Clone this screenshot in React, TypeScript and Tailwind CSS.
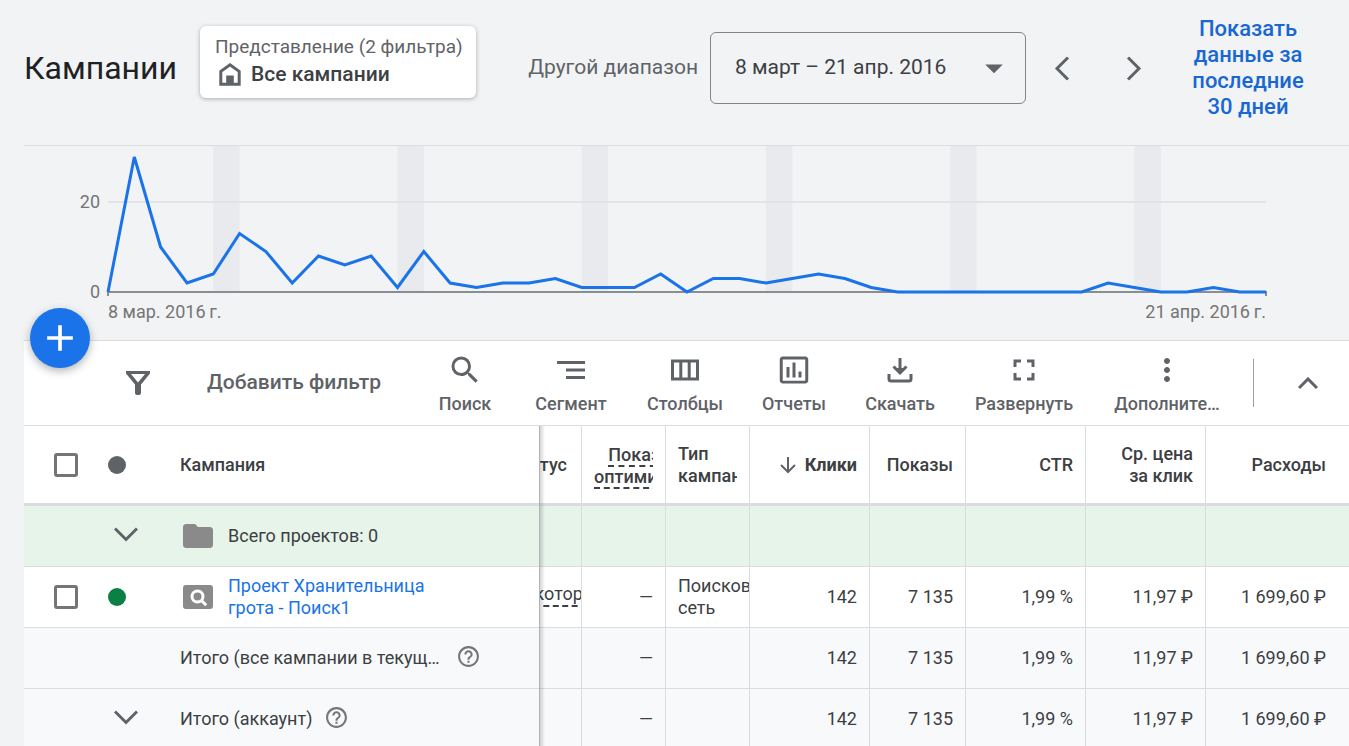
import React, { useState } from 'react';
import {
  MdAdd,
  MdArrowDropDown,
  MdFolder,
  MdFullscreen,
  MdHelpOutline,
  MdInsertChartOutlined,
  MdMoreVert,
  MdSearch,
} from 'react-icons/md';

// clicks per day, 8 March to 21 April
const clicks = [
  0, 30, 10, 2, 4, 13, 9, 2, 8, 6, 8, 1, 9, 2, 1, 2, 2, 3, 1, 1, 1, 4, 0, 3, 3, 2, 3, 4, 3, 1, 0, 0, 0, 0, 0, 0, 0, 0,
  2, 1, 0, 0, 1, 0, 0,
];

const CHART_LEFT = 84;
const CHART_WIDTH = 1158;
const CHART_BASE = 146;
const STEP = CHART_WIDTH / (clicks.length - 1);

function ClicksChart() {
  const points = clicks.map((v, i) => `${(CHART_LEFT + i * STEP).toFixed(1)},${CHART_BASE - v * 4.5}`).join(' ');
  const weekends = [4, 11, 18, 25, 32, 39];

  return (
    <svg viewBox="0 0 1325 194" className="block w-full" role="img" aria-label="Клики">
      {weekends.map((day) => (
        <rect key={day} x={CHART_LEFT + day * STEP} y="0" width={STEP} height={CHART_BASE} fill="#e8eaed" />
      ))}
      <line x1="84" y1="56" x2="1242" y2="56" stroke="#e1e3e6" strokeWidth="2" />
      <path d="M84 150V146H1242V150" fill="none" stroke="#8a8d91" strokeWidth="2" />
      <polyline points={points} fill="none" stroke="#1a73e8" strokeWidth="3" />
      <g fill="#757575" fontSize="18" fontFamily="Roboto, sans-serif">
        <text x="76" y="62" textAnchor="end">20</text>
        <text x="76" y="152" textAnchor="end">0</text>
        <text x="84" y="172">8 мар. 2016{'\u2009'}г.</text>
        <text x="1242" y="172" textAnchor="end">21 апр. 2016{'\u2009'}г.</text>
      </g>
    </svg>
  );
}

function Chevron({ className = '' }) {
  return (
    <svg className={className} width="24" height="15" viewBox="0 0 24 15" fill="none" stroke="#5f6368" strokeWidth="3">
      <path d="M1 1.5 12 12.5 23 1.5" />
    </svg>
  );
}

function HomeIcon() {
  return (
    <svg width="22" height="23" viewBox="0 0 22 23" fill="none" stroke="#5f6368" strokeWidth="3">
      <path d="M1.8 8.4 11 1.8l9.2 6.6v12.8H1.8z" />
      <path d="M7.2 12.5h7.6v9H7.2z" fill="#5f6368" stroke="none" />
    </svg>
  );
}

function FilterIcon() {
  return (
    <svg width="24" height="24" viewBox="0 0 24 24" fill="#5f6368">
      <path fillRule="evenodd" d="M0 0h24v2.5L15 13.5V22a2 2 0 0 1-2 2h-2a2 2 0 0 1-2-2v-8.5L0 2.5zM5 3l7 8.5L19 3z" />
    </svg>
  );
}

function SegmentIcon() {
  return (
    <svg width="28" height="18" viewBox="0 0 28 18" fill="#5f6368">
      <path d="M0 0h28v3H0zM9 7.5h19v3H9zM9 15h19v3H9z" />
    </svg>
  );
}

function ColumnsIcon() {
  return (
    <svg width="28" height="22" viewBox="0 0 28 22" fill="none" stroke="#5f6368" strokeWidth="3">
      <path d="M1.5 2h25v18h-25zM9.8 2v18M18.2 2v18" />
    </svg>
  );
}

function DownloadIcon() {
  return (
    <svg width="26" height="26" viewBox="0 0 26 26" fill="none" stroke="#5f6368" strokeWidth="3">
      <path d="M2 17v5a2 2 0 0 0 2 2h18a2 2 0 0 0 2-2v-5" />
      <path d="M13 1v13M6.5 9.500 13 16l6.500-6.500" />
      <path d="m8 11 5 5 5-5z" fill="#5f6368" stroke="none" />
    </svg>
  );
}

function SearchCampaignIcon() {
  return (
    <svg width="30" height="24" viewBox="0 0 30 24" fill="none">
      <rect width="30" height="24" rx="3" fill="#8a8a8a" />
      <circle cx="14.5" cy="11.5" r="5.5" stroke="#fff" strokeWidth="3" />
      <path d="m18 15 5.200 5.200" stroke="#fff" strokeWidth="3" />
    </svg>
  );
}

const tools = [
  { label: 'Поиск', icon: <MdSearch size={36} />, width: 'w-[100px]' },
  { label: 'Сегмент', icon: <SegmentIcon />, width: 'w-[112px]' },
  { label: 'Столбцы', icon: <ColumnsIcon />, width: 'w-[116px]' },
  { label: 'Отчеты', icon: <MdInsertChartOutlined size={36} />, width: 'w-[102px]' },
  { label: 'Скачать', icon: <DownloadIcon />, width: 'w-[110px]' },
  { label: 'Развернуть', icon: <MdFullscreen size={36} />, width: 'w-[138px]' },
  { label: 'Дополните…', icon: <MdMoreVert size={36} />, width: 'w-[148px]' },
];

const line = 'border-b border-r border-[#dadce0]';
const edge =
  'relative z-10 border-r after:absolute after:top-0 after:left-full after:w-[6px] after:bg-linear-to-r after:from-black/20 after:to-transparent';
const frozen = `${edge} border-b border-[#dadce0] after:-bottom-px`;

function Metrics() {
  return (
    <>
      <td className={`${line} px-3 text-right`}>142</td>
      <td className={`${line} px-3 text-right`}>7 135</td>
      <td className={`${line} px-3 text-right`}>1,99 %</td>
      <td className={`${line} px-3 text-right`}>11,97 ₽</td>
      <td className="border-b border-[#dadce0] pr-[23px] text-right">1 699,60 ₽</td>
    </>
  );
}

function CampaignTable() {
  const [all, setAll] = useState(false);
  const [picked, setPicked] = useState(false);
  const box =
    'block h-6 w-6 appearance-none rounded-[3px] border-[3px] border-[#757575] bg-white checked:border-[#1a73e8] checked:bg-[#1a73e8]';

  return (
    <table className="w-full table-fixed border-separate border-spacing-0 text-[18px] leading-[22px] text-[#3c4043]">
      <colgroup>
        <col className="w-[68px]" />
        <col className="w-[76px]" />
        <col className="w-[372px]" />
        <col className="w-[42px]" />
        <col className="w-[84px]" />
        <col className="w-[84px]" />
        <col className="w-[120px]" />
        <col className="w-[96px]" />
        <col className="w-[120px]" />
        <col className="w-[120px]" />
        <col />
      </colgroup>
      <thead>
        <tr className="h-20 bg-white [&>th]:border-b-[3px] [&>th]:border-[#dadce0] [&>th]:p-0 [&>th]:font-medium">
          <th>
            <input
              type="checkbox"
              aria-label="Выбрать все кампании"
              className={`${box} ml-[30px]`}
              checked={all}
              onChange={() => setAll(!all)}
            />
          </th>
          <th>
            <span className="ml-4 block h-[18px] w-[18px] rounded-full bg-[#5f6368]" />
          </th>
          <th className={`${edge} after:-bottom-[3px]`}>
            <span className="block pl-3 text-left">Кампания</span>
          </th>
          <th className="border-r">
            <span className="flex justify-end overflow-hidden pr-[14px]">Статус</span>
          </th>
          <th className="border-r">
            <span className="mx-3 block overflow-hidden pt-1 pb-px text-left">
              <span className="inline-block text-right align-top">
                <span className="border-b-2 border-dashed border-[#3c4043]">Показатель</span>
                <br />
                <span className="border-b-2 border-dashed border-[#3c4043]">оптимизации</span>
              </span>
            </span>
          </th>
          <th className="border-r">
            <span className="mx-3 block overflow-hidden text-left">Тип кампании</span>
          </th>
          <th className="border-r">
            <button type="button" className="ml-auto flex items-center gap-2 pr-3 font-bold">
              <svg width="18" height="18" viewBox="0 0 18 18" fill="none" stroke="#5f6368" strokeWidth="2">
                <path d="M9 1v15M2 9l7 7 7-7" />
              </svg>
              Клики
            </button>
          </th>
          <th className="border-r">
            <span className="block pr-3 text-right">Показы</span>
          </th>
          <th className="border-r">
            <span className="block pr-3 text-right">CTR</span>
          </th>
          <th className="border-r">
            <span className="block pr-3 pl-8 text-right">Ср. цена за клик</span>
          </th>
          <th>
            <span className="block pr-[23px] text-right">Расходы</span>
          </th>
        </tr>
      </thead>
      <tbody>
        <tr className="h-[61px] bg-[#e6f4ea]">
          <td className="border-b border-[#dadce0]" />
          <td className="border-b border-[#dadce0]">
            <button type="button" aria-label="Показать проекты" className="mb-1 ml-[22px] block">
              <Chevron />
            </button>
          </td>
          <td className={frozen}>
            <div className="flex items-center gap-3 pl-3">
              <MdFolder size={36} color="#8a8a8a" />
              Всего проектов: 0
            </div>
          </td>
          {[0, 1, 2, 3, 4, 5, 6].map((n) => (
            <td key={n} className={line} />
          ))}
          <td className="border-b border-[#dadce0]" />
        </tr>
        <tr className="h-[61px] bg-white">
          <td className="border-b border-[#dadce0]">
            <input
              type="checkbox"
              aria-label="Проект Хранительница грота - Поиск1"
              className={`${box} ml-[30px]`}
              checked={picked}
              onChange={() => setPicked(!picked)}
            />
          </td>
          <td className="border-b border-[#dadce0]">
            <span className="ml-4 block h-[18px] w-[18px] rounded-full bg-[#0b8043]" />
          </td>
          <td className={frozen}>
            <div className="flex items-center gap-[15px] pl-[15px]">
              <SearchCampaignIcon />
              <a href="#campaign" className="w-[220px] text-[#1a73e8]">
                Проект Хранительница грота - Поиск1
              </a>
            </div>
          </td>
          <td className={line}>
            <div className="mb-1 flex justify-center overflow-hidden">
              <span className="border-b-2 border-dashed border-[#3c4043]">некоторые</span>
            </div>
          </td>
          <td className={`${line} px-3 text-right`}>—</td>
          <td className={line}>
            <div className="overflow-hidden pl-3">Поисковая сеть</div>
          </td>
          <Metrics />
        </tr>
        <tr className="h-[61px] bg-[#f8f9fb]">
          <td className="border-b border-[#dadce0]" />
          <td className="border-b border-[#dadce0]" />
          <td className={frozen}>
            <div className="flex items-center gap-4 pl-3">
              <span>Итого (все кампании в текущ…</span>
              <MdHelpOutline size={25} color="#757575" className="mb-1" />
            </div>
          </td>
          <td className={line} />
          <td className={`${line} px-3 text-right`}>—</td>
          <td className={line} />
          <Metrics />
        </tr>
        <tr className="h-[61px] bg-[#f8f9fb]">
          <td className="border-b border-[#dadce0]" />
          <td className="border-b border-[#dadce0]">
            <button type="button" aria-label="Показать итоги аккаунта" className="mb-1 ml-[22px] block">
              <Chevron />
            </button>
          </td>
          <td className={frozen}>
            <div className="flex items-center gap-3 pl-3">
              <span>Итого (аккаунт)</span>
              <MdHelpOutline size={25} color="#757575" className="mb-1" />
            </div>
          </td>
          <td className={line} />
          <td className={`${line} px-3 text-right`}>—</td>
          <td className={line} />
          <Metrics />
        </tr>
      </tbody>
    </table>
  );
}

export default function App() {
  const [filter, setFilter] = useState('');

  return (
    <div className="h-screen overflow-hidden bg-[#f1f3f4] pl-6 font-['Roboto',sans-serif] text-[#3c4043]">
      <header className="flex h-[145px] items-start">
        <h1 className="mt-12 text-[32px] leading-10 text-[#202124]">Кампании</h1>
        <button
          type="button"
          className="mt-[26px] ml-[23px] h-[72px] w-[276px] rounded-md bg-white px-[15px] text-left whitespace-nowrap shadow-[0_1px_4px_rgba(60,64,67,0.4)]"
        >
          <span className="block text-[19px] leading-6 text-[#5f6368]">Представление (2 фильтра)</span>
          <span className="flex items-center gap-[10px] pl-1 text-[21px] leading-[30px] font-medium">
            <HomeIcon />
            Все кампании
          </span>
        </button>

        <div className="mt-4 mr-[33px] ml-auto flex items-center">
          <span className="text-[21px] text-[#5f6368]">Другой диапазон</span>
          <button
            type="button"
            aria-haspopup="dialog"
            className="ml-3 flex h-[72px] w-[316px] items-center justify-between rounded-md border border-[#80868b] pr-[13px] pl-6 text-[21px]"
          >
            8 март – 21 апр. 2016
            <MdArrowDropDown size={42} color="#5f6368" className="-mr-[3px]" />
          </button>
          <button type="button" aria-label="Предыдущий период" className="ml-6 flex w-6 justify-center">
            <Chevron className="rotate-90" />
          </button>
          <button type="button" aria-label="Следующий период" className="ml-12 flex w-6 justify-center">
            <Chevron className="-rotate-90" />
          </button>
          <a href="#last30" className="ml-[34px] w-[136px] px-1 text-center text-[22px] leading-[26px] font-medium text-[#1967d2]">
            Показать данные за последние 30 дней
          </a>
        </div>
      </header>

      <section className="relative border-t border-[#dadce0]">
        <ClicksChart />
        <button
          type="button"
          aria-label="Создать кампанию"
          className="absolute -bottom-7 left-[6px] z-20 flex h-[60px] w-[60px] items-center justify-center rounded-full bg-[#1a73e8] text-white shadow-[0_3px_8px_rgba(60,64,67,0.4)]"
        >
          <MdAdd size={44} />
        </button>
      </section>

      <div className="flex h-[86px] items-center border-y border-[#dadce0] bg-white text-[#5f6368]">
        <label htmlFor="filter" className="ml-[102px]" aria-label="Фильтр">
          <FilterIcon />
        </label>
        <input
          id="filter"
          value={filter}
          onChange={(e) => setFilter(e.target.value)}
          placeholder="Добавить фильтр"
          className="mr-[6px] ml-[57px] w-0 min-w-0 flex-1 bg-transparent text-[21px] font-medium outline-none placeholder:text-[#5f6368]"
        />
        {tools.map((tool) => (
          <button
            key={tool.label}
            type="button"
            className={`${tool.width} flex shrink-0 flex-col items-center text-[18px] leading-[22px] font-medium`}
          >
            <span className="flex h-9 items-center">{tool.icon}</span>
            <span className="mt-[5px]">{tool.label}</span>
          </button>
        ))}
        <button type="button" aria-label="Свернуть график" className="ml-3 flex h-12 w-24 shrink-0 items-center border-l border-[#9aa0a6] pl-[44px]">
          <svg width="20" height="13" viewBox="0 0 20 13" fill="none" stroke="#5f6368" strokeWidth="3">
            <path d="M1 11 10 2l9 9" />
          </svg>
        </button>
      </div>

      <CampaignTable />
    </div>
  );
}
